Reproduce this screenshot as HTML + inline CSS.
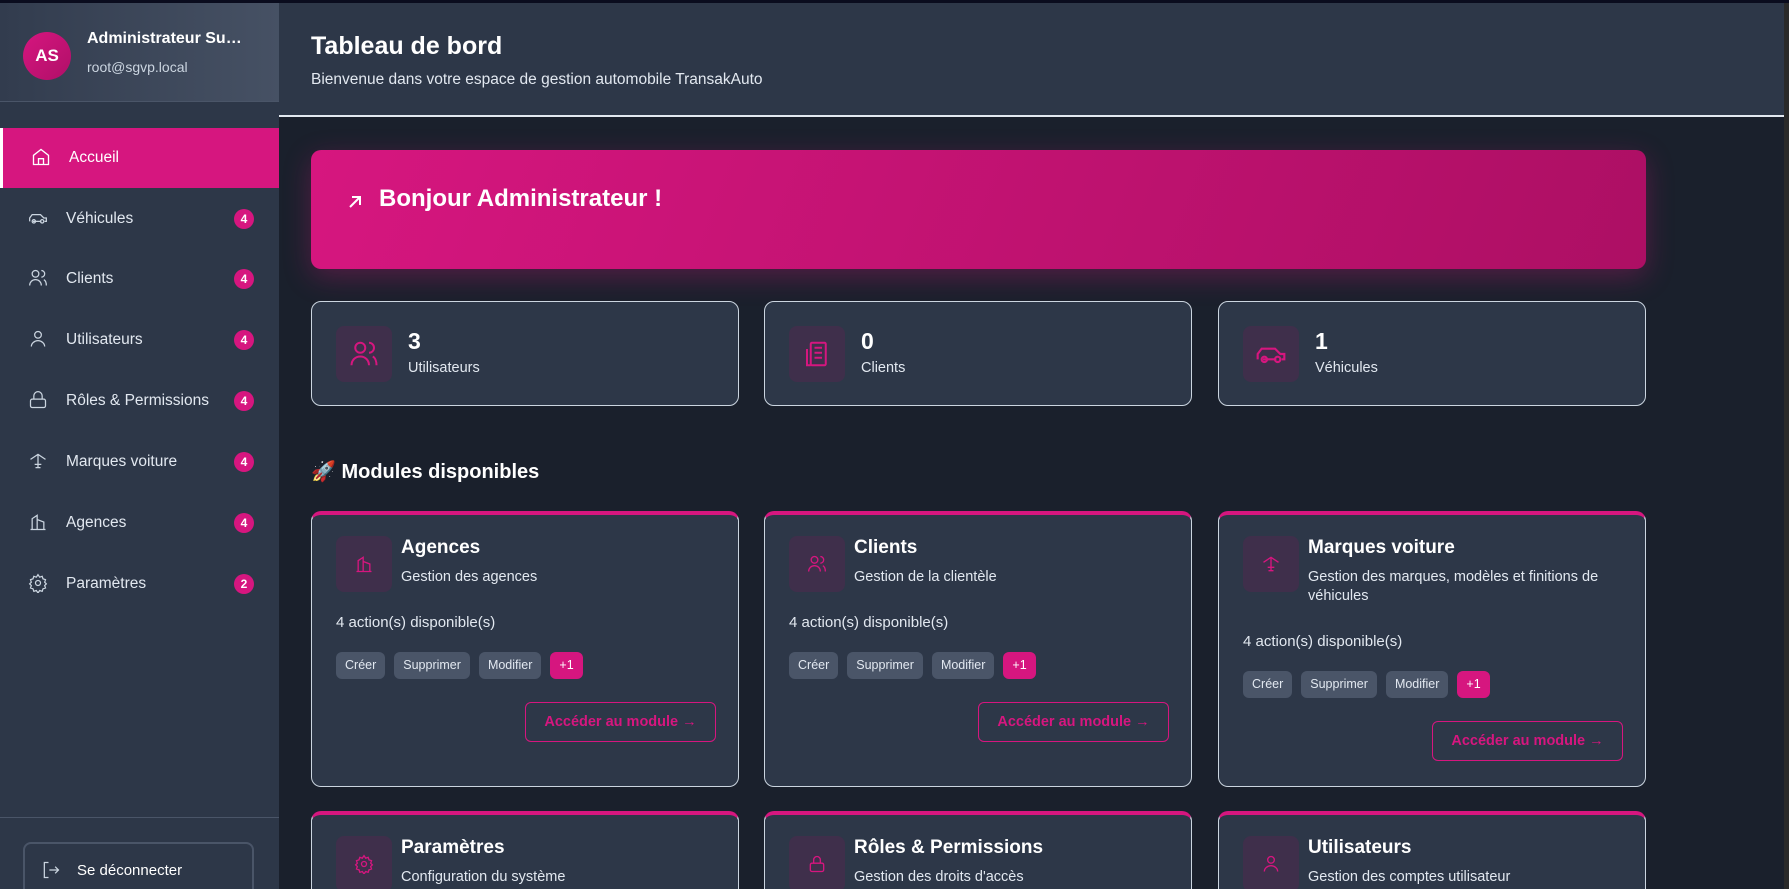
<!DOCTYPE html>
<html><head><meta charset="utf-8">
<style>
*{box-sizing:border-box;margin:0;padding:0}
html,body{width:1789px;height:889px;overflow:hidden}
body{background:#1a202c;font-family:"Liberation Sans",sans-serif;color:#fff}
#wrap{position:relative;width:1789px;height:889px;overflow:hidden;background:#1a202c}
.topbar{position:absolute;left:0;top:0;width:1789px;height:3px;background:#0a0c1e}
.sb{position:absolute;left:0;top:3px;width:279px;height:886px;background:#2d3748;overflow:hidden}
.sbh{position:absolute;left:0;top:0;width:279px;height:99px;background:linear-gradient(90deg,#323c4e,#465164);border-bottom:1px solid #4a5568}
.av{position:absolute;left:23px;top:29px;width:48px;height:48px;border-radius:50%;background:linear-gradient(135deg,#d6167f,#b00f68);font-weight:bold;font-size:17px;text-align:center;line-height:48px}
.un{position:absolute;left:87px;top:27px;font-weight:bold;font-size:16px}
.ue{position:absolute;left:87px;top:56px;font-size:14px;color:#cbd5e0}
.it{position:absolute;left:0;width:279px;height:60px;font-size:15.5px;color:#e2e8f0}
.it svg{position:absolute;left:28px;top:19px}
.it span.l{position:absolute;left:66px;top:21px}
.it .b{position:absolute;left:234px;top:20px;width:20px;height:20px;border-radius:50%;background:#d6167f;color:#fff;font-weight:bold;font-size:12px;text-align:center;line-height:20px}
.act{background:#d6167f;border-left:3px solid #fff;color:#fff}
.ft{position:absolute;left:0;top:814px;width:279px;border-top:1px solid #4a5568}
.lo{position:absolute;left:23px;top:839px;width:231px;height:47px;border:2px solid #4a5568;border-bottom:0;border-radius:8px 8px 0 0;font-size:15px}
.main{position:absolute;left:279px;top:3px;width:1505px;height:886px;overflow:hidden}
.hd{position:absolute;left:0;top:0;width:1505px;height:114px;background:#2d3748;border-bottom:2px solid #e2e8f0}
.hd h1{position:absolute;left:32px;top:29px;font-size:25px;font-weight:bold}
.hd p{position:absolute;left:32px;top:68px;font-size:15.5px;color:#e2e8f0}
.ban{position:absolute;left:32px;top:147px;width:1335px;height:119px;border-radius:10px;background:linear-gradient(110deg,#d6167f,#ad0f64);box-shadow:0 8px 28px rgba(214,22,127,.3)}
.ban .t{position:absolute;left:68px;top:35px;font-size:24px;font-weight:bold}
.stat{position:absolute;top:298px;width:428px;height:105px;background:#2d3748;border:1px solid #cbd5e0;border-radius:10px}
.ib{position:absolute;width:56px;height:56px;border-radius:8px;background:#3f2f4b;display:flex;align-items:center;justify-content:center}
.stat .ib{left:24px;top:24px}
.stat .n{position:absolute;left:96px;top:26px;font-size:23px;font-weight:bold}
.stat .lb{position:absolute;left:96px;top:58px;font-size:14.5px;color:#e2e8f0}
.mh{position:absolute;left:32px;top:456px;font-size:20px;font-weight:bold}
.card{position:absolute;width:428px;height:276px;background:#2d3748;border:1px solid #cbd5e0;border-top:4px solid #d6167f;border-radius:10px;overflow:hidden}
.card.short{height:78px;border-bottom:0;border-radius:10px 10px 0 0}
.card .ib{left:24px;top:21px}
.card .ti{position:absolute;left:89px;top:22px;font-size:19px;font-weight:bold}
.card .de{position:absolute;left:89px;top:53px;width:320px;font-size:14.5px;color:#e2e8f0;line-height:19px}
.card .ac{position:absolute;left:24px;top:99px;font-size:15px;color:#e2e8f0}
.tags{position:absolute;left:24px;top:137px;display:flex;gap:9px}
.tag{height:27px;padding:0 9px;border-radius:6px;background:#4a5568;color:#e2e8f0;font-size:12.5px;line-height:27px}
.tag.p{background:#d6167f;color:#fff}
.btn{position:absolute;left:213px;top:187px;width:191px;height:40px;border:1px solid #d6167f;border-radius:6px;color:#d6167f;font-size:14.5px;font-weight:bold;text-align:center;line-height:38px}
.sc{position:absolute;right:0;top:3px;width:5px;height:886px;background:#2a2a2a}
</style></head><body><div id="wrap">
<div class="topbar"></div>
<div class="sb">
 <div class="sbh"><div class="av">AS</div><div class="un">Administrateur Su…</div><div class="ue">root@sgvp.local</div></div>
 <div class="it act" style="top:125px"><svg width="20" height="20" viewBox="0 0 24 24" fill="none" stroke="#fff" stroke-width="1.6"><path d="M3 10l9-7 9 7v11H3z"/><path d="M9 21v-7h6v7"/></svg><span class="l">Accueil</span></div>
 <div class="it" style="top:186px"><svg width="20" height="20" viewBox="0 0 24 24" fill="none" stroke="#cbd5e0" stroke-width="1.5"><path d="M2 16v-4l3-4h10l4 4h3v4h-2M6 16h10"/><circle cx="7" cy="16" r="2"/><circle cx="17" cy="16" r="2"/></svg><span class="l">Véhicules</span><span class="b">4</span></div>
 <div class="it" style="top:246px"><svg width="20" height="20" viewBox="0 0 24 24" fill="none" stroke="#cbd5e0" stroke-width="1.5"><circle cx="9" cy="7" r="4"/><path d="M2 21c0-4 3-7 7-7s7 3 7 7M16 3a4 4 0 010 8M19 14c2 1 3 4 3 7"/></svg><span class="l">Clients</span><span class="b">4</span></div>
 <div class="it" style="top:307px"><svg width="20" height="20" viewBox="0 0 24 24" fill="none" stroke="#cbd5e0" stroke-width="1.5"><circle cx="12" cy="7" r="4"/><path d="M4 21c0-4 4-7 8-7s8 3 8 7"/></svg><span class="l">Utilisateurs</span><span class="b">4</span></div>
 <div class="it" style="top:368px"><svg width="20" height="20" viewBox="0 0 24 24" fill="none" stroke="#cbd5e0" stroke-width="1.5"><rect x="3" y="11" width="18" height="10" rx="2"/><path d="M7 11V7a5 5 0 0110 0v4"/></svg><span class="l">Rôles &amp; Permissions</span><span class="b">4</span></div>
 <div class="it" style="top:429px"><svg width="20" height="20" viewBox="0 0 24 24" fill="none" stroke="#cbd5e0" stroke-width="1.5"><path d="M3 10l9-6 9 6M12 4v16M8 16h8M9 20h6"/></svg><span class="l">Marques voiture</span><span class="b">4</span></div>
 <div class="it" style="top:490px"><svg width="20" height="20" viewBox="0 0 24 24" fill="none" stroke="#cbd5e0" stroke-width="1.5"><path d="M3 21h18M5 21V8l6-4v17M11 21V9l8 3v9"/></svg><span class="l">Agences</span><span class="b">4</span></div>
 <div class="it" style="top:551px"><svg width="20" height="20" viewBox="0 0 24 24" fill="none" stroke="#cbd5e0" stroke-width="1.5"><circle cx="12" cy="12" r="3"/><path d="M12 2l2 3 3-1 1 3 3 1-1 3 2 2-2 2 1 3-3 1-1 3-3-1-2 3-2-3-3 1-1-3-3-1 1-3-2-2 2-2-1-3 3-1 1-3 3 1z"/></svg><span class="l">Paramètres</span><span class="b">2</span></div>
 <div class="ft"></div>
 <div class="lo"><svg style="position:absolute;left:16px;top:16px" width="20" height="20" viewBox="0 0 24 24" fill="none" stroke="#cbd5e0" stroke-width="1.5"><path d="M9 3H4v18h5M10 12h11M17 8l4 4-4 4"/></svg><span style="position:absolute;left:52px;top:18px">Se déconnecter</span></div>
</div>
<div class="main">
 <div class="hd"><h1>Tableau de bord</h1><p>Bienvenue dans votre espace de gestion automobile TransakAuto</p></div>
 <div class="ban"><svg style="position:absolute;left:36px;top:44px" width="16" height="16" viewBox="0 0 16 16" fill="none" stroke="#fff" stroke-width="2"><path d="M3 13L13 3M5 3h8v8"/></svg><div class="t">Bonjour Administrateur !</div></div>
 <div class="stat" style="left:32px"><div class="ib"><svg width="30" height="30" viewBox="0 0 24 24" fill="none" stroke="#d6167f" stroke-width="1.6"><circle cx="9" cy="7" r="4"/><path d="M2 21c0-4 3-7 7-7s7 3 7 7M16 3a4 4 0 010 8M19 14c2 1 3 4 3 7"/></svg></div><div class="n">3</div><div class="lb">Utilisateurs</div></div>
 <div class="stat" style="left:485px"><div class="ib"><svg width="30" height="30" viewBox="0 0 24 24" fill="none" stroke="#d6167f" stroke-width="1.6"><rect x="7" y="3" width="12" height="18" rx="1"/><path d="M4 8v13h3M10 7h6M10 11h6M10 15h6"/></svg></div><div class="n">0</div><div class="lb">Clients</div></div>
 <div class="stat" style="left:939px"><div class="ib"><svg width="32" height="32" viewBox="0 0 24 24" fill="none" stroke="#d6167f" stroke-width="1.6"><path d="M2 16v-4l3-4h10l4 4h3v4h-2M6 16h10"/><circle cx="7" cy="16" r="2"/><circle cx="17" cy="16" r="2"/></svg></div><div class="n">1</div><div class="lb">Véhicules</div></div>
 <div class="mh">🚀 Modules disponibles</div>
 <div class="card" style="left:32px;top:508px"><div class="ib"><svg width="20" height="20" viewBox="0 0 24 24" fill="none" stroke="#d6167f" stroke-width="1.6"><path d="M3 21h18M5 21V8l6-4v17M11 21V9l8 3v9"/></svg></div><div class="ti">Agences</div><div class="de">Gestion des agences</div><div class="ac">4 action(s) disponible(s)</div><div class="tags"><span class="tag">Créer</span><span class="tag">Supprimer</span><span class="tag">Modifier</span><span class="tag p">+1</span></div><div class="btn">Accéder au module →</div></div>
 <div class="card" style="left:485px;top:508px"><div class="ib"><svg width="20" height="20" viewBox="0 0 24 24" fill="none" stroke="#d6167f" stroke-width="1.6"><circle cx="9" cy="7" r="4"/><path d="M2 21c0-4 3-7 7-7s7 3 7 7M16 3a4 4 0 010 8M19 14c2 1 3 4 3 7"/></svg></div><div class="ti">Clients</div><div class="de">Gestion de la clientèle</div><div class="ac">4 action(s) disponible(s)</div><div class="tags"><span class="tag">Créer</span><span class="tag">Supprimer</span><span class="tag">Modifier</span><span class="tag p">+1</span></div><div class="btn">Accéder au module →</div></div>
 <div class="card" style="left:939px;top:508px"><div class="ib"><svg width="20" height="20" viewBox="0 0 24 24" fill="none" stroke="#d6167f" stroke-width="1.6"><path d="M3 10l9-6 9 6M12 4v16M8 16h8M9 20h6"/></svg></div><div class="ti">Marques voiture</div><div class="de">Gestion des marques, modèles et finitions de véhicules</div><div class="ac" style="top:118px">4 action(s) disponible(s)</div><div class="tags" style="top:156px"><span class="tag">Créer</span><span class="tag">Supprimer</span><span class="tag">Modifier</span><span class="tag p">+1</span></div><div class="btn" style="top:206px">Accéder au module →</div></div>
 <div class="card short" style="left:32px;top:808px"><div class="ib"><svg width="20" height="20" viewBox="0 0 24 24" fill="none" stroke="#d6167f" stroke-width="1.6"><circle cx="12" cy="12" r="3"/><path d="M12 2l2 3 3-1 1 3 3 1-1 3 2 2-2 2 1 3-3 1-1 3-3-1-2 3-2-3-3 1-1-3-3-1 1-3-2-2 2-2-1-3 3-1 1-3 3 1z"/></svg></div><div class="ti">Paramètres</div><div class="de">Configuration du système</div></div>
 <div class="card short" style="left:485px;top:808px"><div class="ib"><svg width="20" height="20" viewBox="0 0 24 24" fill="none" stroke="#d6167f" stroke-width="1.6"><rect x="4" y="11" width="16" height="10" rx="2"/><path d="M8 11V7a4 4 0 018 0v4"/></svg></div><div class="ti">Rôles &amp; Permissions</div><div class="de">Gestion des droits d'accès</div></div>
 <div class="card short" style="left:939px;top:808px"><div class="ib"><svg width="20" height="20" viewBox="0 0 24 24" fill="none" stroke="#d6167f" stroke-width="1.6"><circle cx="12" cy="7" r="4"/><path d="M4 21c0-4 4-7 8-7s8 3 8 7"/></svg></div><div class="ti">Utilisateurs</div><div class="de">Gestion des comptes utilisateur</div></div>
</div>
<div class="sc"></div>
</div></body></html>
